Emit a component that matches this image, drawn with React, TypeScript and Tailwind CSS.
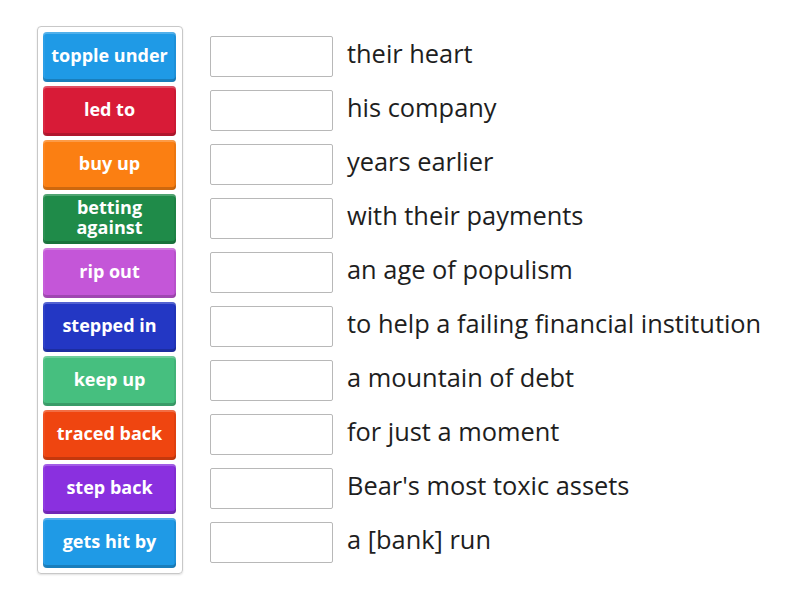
import React from "react";

const tiles: { label: string; cls: string }[] = [
  { label: "topple under", cls: "bg-[#1f9ae6]" },
  { label: "led to", cls: "bg-[#d81b37]" },
  { label: "buy up", cls: "bg-[#fb7f12]" },
  { label: "betting against", cls: "bg-[#1f8b49]" },
  { label: "rip out", cls: "bg-[#c456d8]" },
  { label: "stepped in", cls: "bg-[#2337c4]" },
  { label: "keep up", cls: "bg-[#46bf7f]" },
  { label: "traced back", cls: "bg-[#ef4510]" },
  { label: "step back", cls: "bg-[#8a30df]" },
  { label: "gets hit by", cls: "bg-[#1f9ae6]" },
];

const phrases = [
  "their heart",
  "his company",
  "years earlier",
  "with their payments",
  "an age of populism",
  "to help a failing financial institution",
  "a mountain of debt",
  "for just a moment",
  "Bear's most toxic assets",
  "a [bank] run",
];

export default function App() {
  return (
    <div
      className="w-[800px] h-[600px] bg-white flex items-start"
      style={{ fontFamily: '"Open Sans", "Noto Sans", sans-serif' }}
    >
      <div className="ml-[37px] mt-[26px] w-[146px] border border-[#c8c8c8] rounded-[4px] p-[5px] flex flex-col gap-[4px] shadow-[0_1px_2px_rgba(0,0,0,0.12)]">
        {tiles.map((t) => (
          <div
            key={t.label}
            className={`${t.cls} h-[50px] w-[133px] rounded-[4px] flex items-center justify-center text-center text-white font-bold text-[18px] leading-[20px] px-1 pb-[4px] shadow-[inset_0_2px_0_rgba(255,255,255,0.22),inset_0_-3px_0_rgba(0,0,0,0.18),inset_2px_0_0_rgba(255,255,255,0.06),inset_-2px_0_0_rgba(0,0,0,0.06)]`}
          >
            {t.label}
          </div>
        ))}
      </div>
      <div className="ml-[27px] mt-[36px] flex flex-col gap-[13px]">
        {phrases.map((p) => (
          <div key={p} className="flex items-center h-[41px]">
            <div className="w-[123px] h-[41px] border border-[#b8b8b8] rounded-[2px] bg-white shrink-0" />
            <div className="ml-[14px] -mt-[8px] text-[25.4px] leading-[30px] text-[#1e1e1e] whitespace-nowrap">
              {p}
            </div>
          </div>
        ))}
      </div>
    </div>
  );
}
